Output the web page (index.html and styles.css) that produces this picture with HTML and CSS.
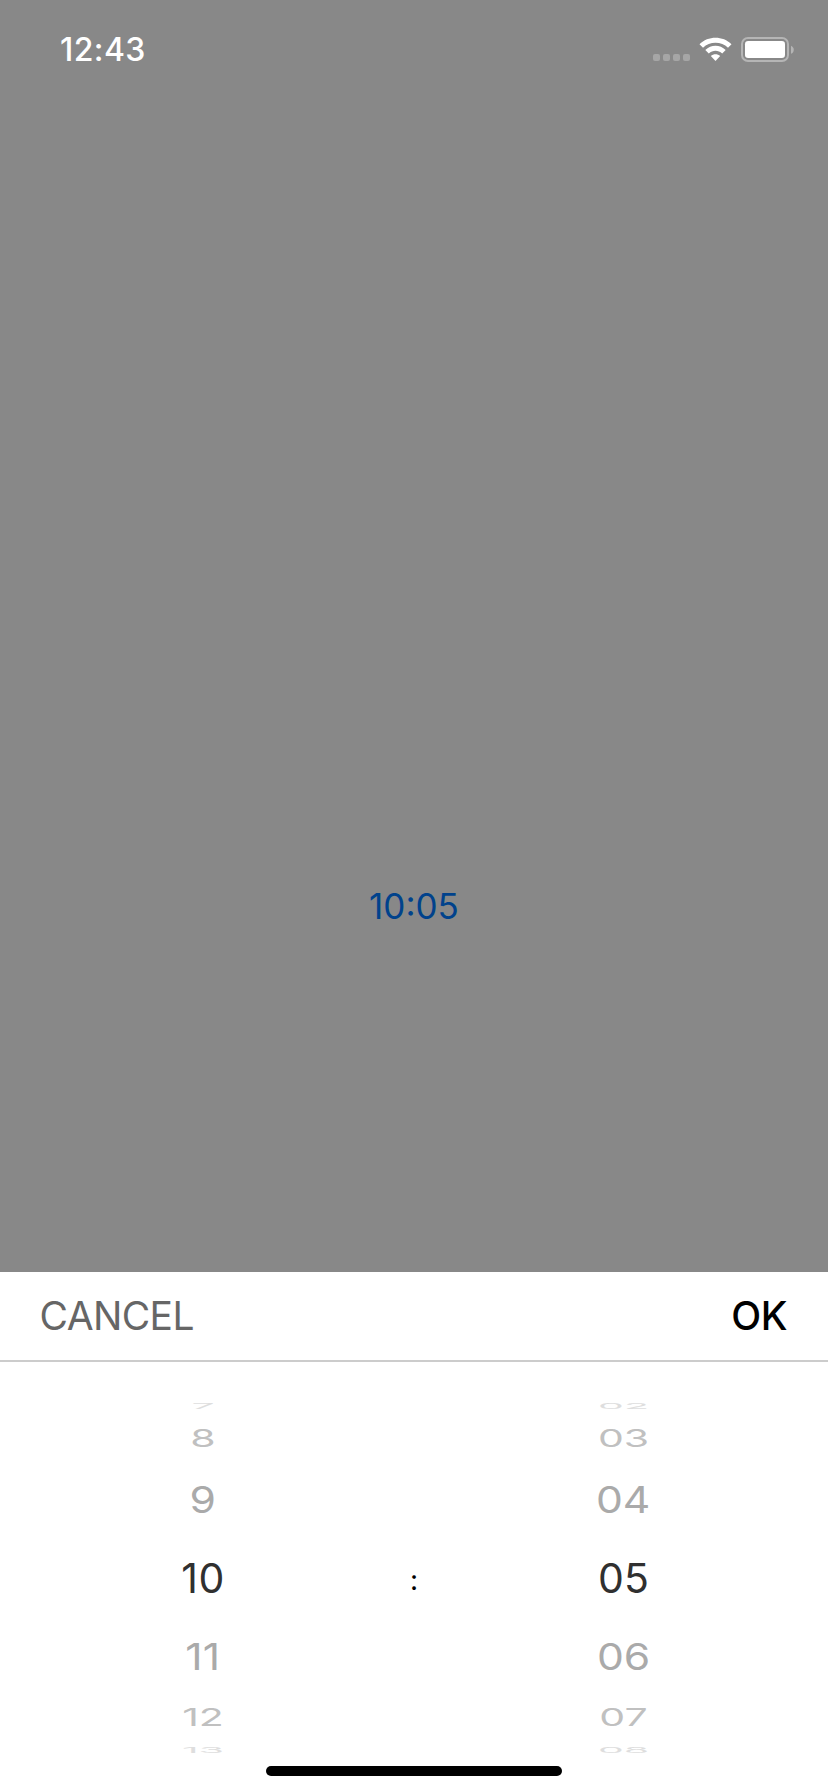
FILE: index.html
```html
<!DOCTYPE html>
<html lang="en">
<head>
<meta charset="utf-8">
<title>Time picker</title>
<link rel="stylesheet" href="styles.css">
</head>
<body>
<div class="screen">
  <header class="status">
    <span class="clock">12:43</span>
    <svg class="indicators" width="142" height="26" viewBox="0 0 142 26">
      <g fill="#a6a6a6">
        <rect x="0" y="16" width="7" height="7" rx="2"/><rect x="10" y="16" width="7" height="7" rx="2"/>
        <rect x="20" y="16" width="7" height="7" rx="2"/><rect x="30" y="16" width="7" height="7" rx="2"/>
      </g>
      <g fill="#fff">
        <path d="M46.500 6.200C55 -2.400 70 -2.400 78.500 6.200L75 9.700C68.500 3.200 56.500 3.200 50 9.700Z"/>
        <path d="M52.300 12C58 6.300 67 6.300 72.700 12L69.200 15.500C65.300 11.900 59.700 11.900 55.800 15.500Z"/>
        <path d="M57.800 18C60.500 15.600 64.500 15.600 67.200 18L62.500 23Z"/>
        <rect x="92" y="3" width="40" height="17" rx="3.200"/>
      </g>
      <rect x="89" y="0" width="46" height="23" rx="6" fill="none" stroke="#b5b5b5" stroke-width="2"/>
      <path d="M138 7.700C141.700 9.200 141.700 14.300 138 15.800Z" fill="#b5b5b5"/>
    </svg>
  </header>
  <main class="backdrop"><span class="value">10:05</span></main>
  <section class="sheet">
    <div class="toolbar"><span class="cancel">CANCEL</span><span class="ok">OK</span></div>
    <div class="picker">
      <div class="wheel hours">
        <div class="row edge"><span>7</span></div>
        <div class="row far"><span>8</span></div>
        <div class="row near"><span>9</span></div>
        <div class="row current"><span>10</span></div>
        <div class="row near"><span>11</span></div>
        <div class="row far"><span>12</span></div>
        <div class="row edge"><span>13</span></div>
      </div>
      <div class="colon">:</div>
      <div class="wheel minutes">
        <div class="row edge"><span>02</span></div>
        <div class="row far"><span>03</span></div>
        <div class="row near"><span>04</span></div>
        <div class="row current"><span>05</span></div>
        <div class="row near"><span>06</span></div>
        <div class="row far"><span>07</span></div>
        <div class="row edge"><span>08</span></div>
      </div>
    </div>
    <div class="home"></div>
  </section>
</div>
</body>
</html>
```
FILE: styles.css
```css
body { margin: 0; font-family: Inter, Roboto, sans-serif; }
.screen { display: flex; flex-direction: column; width: 828px; height: 1792px; background: #888; overflow: hidden; }
.status { display: flex; justify-content: space-between; align-items: flex-start; box-sizing: border-box; height: 88px; padding: 30px 33px 0 60px; flex: none; }
.clock { font-size: 32px; line-height: 40px; font-weight: 550; letter-spacing: 0.4px; color: #fff; }
.indicators { margin-top: 8px; overflow: visible; }
.backdrop { flex: 1; display: flex; justify-content: center; align-items: flex-start; padding-top: 796px; }
.value { font-size: 35px; line-height: 44px; color: #00428c; }
.sheet { display: flex; flex-direction: column; align-items: center; height: 520px; flex: none; background: #fff; }
.toolbar { display: flex; justify-content: space-between; align-items: center; box-sizing: border-box; width: 100%; height: 90px; padding: 0 41px 0 39.5px; border-bottom: 2px solid #ccc; font-size: 39px; line-height: 48px; }
.cancel { color: #666; letter-spacing: -0.6px; }
.ok { color: #000; font-weight: 500; letter-spacing: -0.5px; }
.picker { display: grid; grid-template-columns: 406px 16px 403px; align-items: center; width: 828px; height: 354px; margin-top: 39px; }
.wheel { display: flex; flex-direction: column; }
.row { display: flex; justify-content: center; align-items: center; font-size: 41px; line-height: 50px; }
.row span { flex: none; }
.current { height: 90px; color: #303030; }
.hours .current { letter-spacing: 0.6px; }
.near { height: 67px; color: #aaa; }
.near span { transform: translateY(-1px) scale(1.04, 0.91); }
.far { height: 55px; color: #c0c0c0; }
.far span { transform: translateY(-0.6px) scaleY(0.59); }
.edge { height: 10px; color: #dedede; }
.edge span { transform: scaleY(0.2); }
.colon { font-size: 28px; line-height: 40px; padding-top: 3px; text-align: center; color: #000; }
.home { width: 296px; height: 10px; margin-top: 11px; border-radius: 5px; background: #000; }
```
